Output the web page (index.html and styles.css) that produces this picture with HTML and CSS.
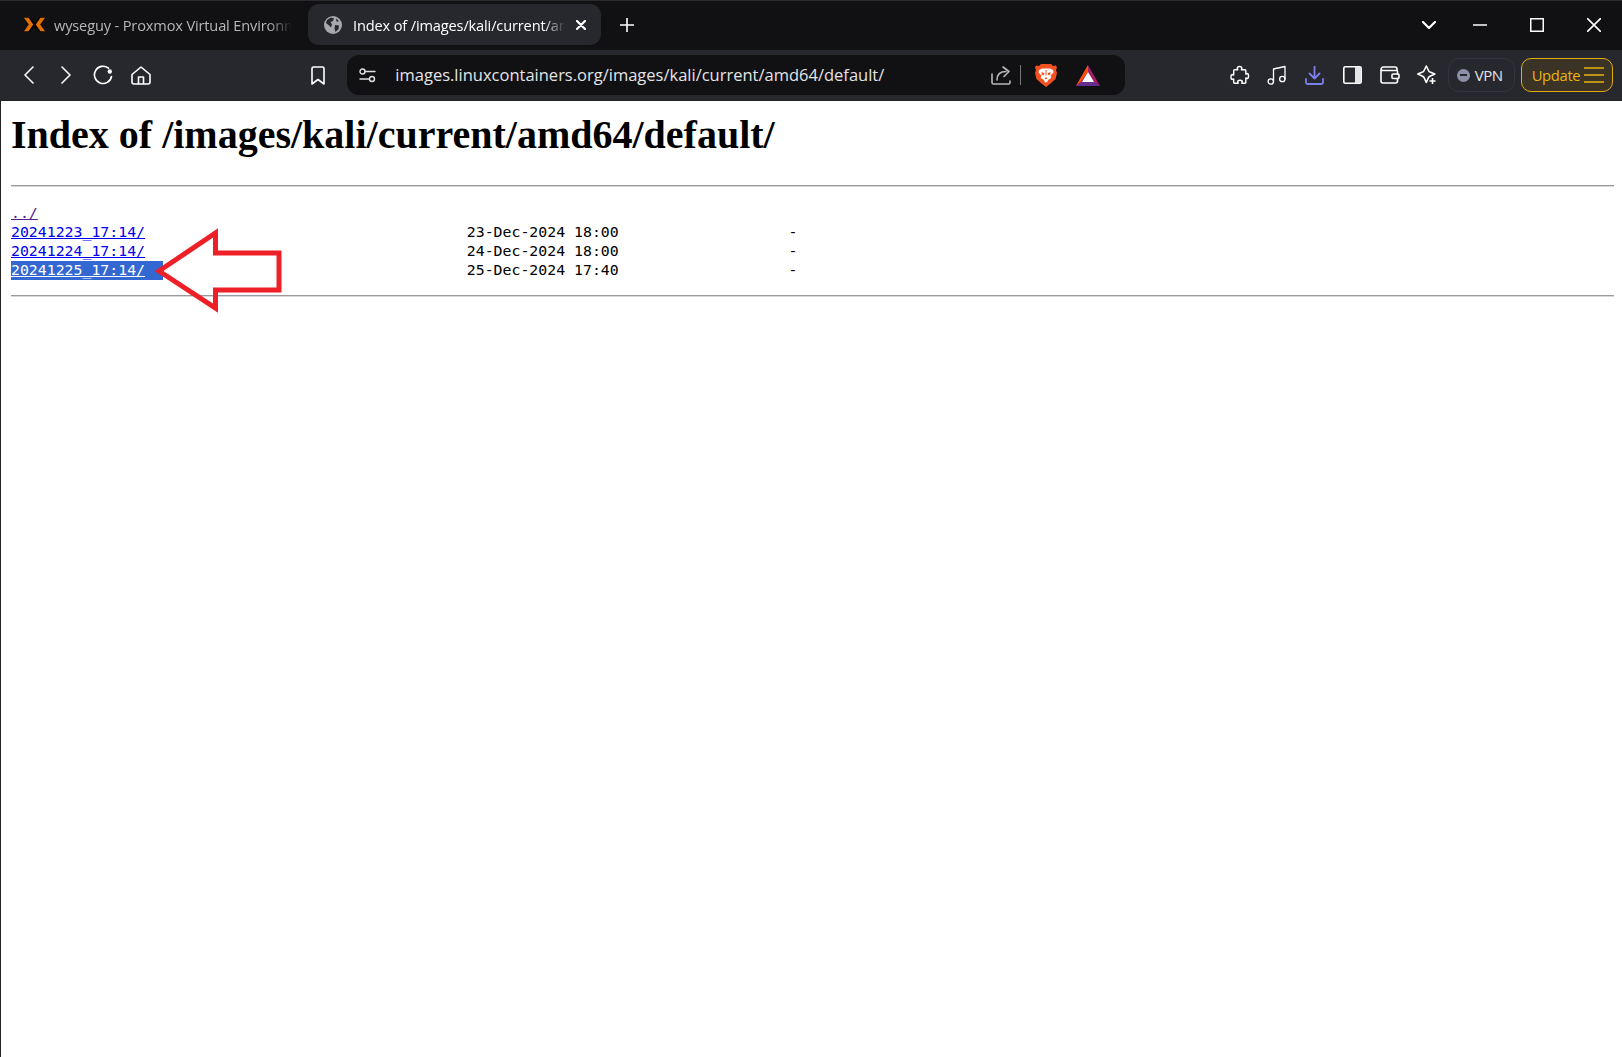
FILE: index.html
```html
<!DOCTYPE html>
<html lang="en">
<head>
<meta charset="utf-8">
<title>Index of /images/kali/current/amd64/default/</title>
<link rel="stylesheet" href="styles.css">
</head>
<body>
<div class="browser">
  <header class="tabstrip">
    <div class="tab">
      <svg class="favicon-px" width="21" height="15" viewBox="0 0 20 14"><path d="M1 0h4.500L10 5 14.500 0H19l-6.700 7L19 14h-4.500L10 9l-4.500 5H1l6.700-7z" fill="#000"/><path d="M0 .5h4.300L8.800 7l-4.500 6.500H0L4.600 7zM20 .5h-4.300L11.200 7l4.500 6.500H20L15.400 7z" fill="#e57000"/></svg>
      <span class="tab-title">wyseguy - Proxmox Virtual Environment</span>
    </div>
    <div class="tab tab-active">
      <svg class="favicon-globe" width="18" height="18" viewBox="0 0 18 18"><circle cx="9" cy="9" r="9" fill="#a6a8ad"/><path d="M3 4l4-2.500 3 1-1 2.500-2.500 1L8 8.500l-1 3L4.500 9 2 7zM11 9l4 .5-.5 3.500-3 3-1-3.500zM12 2.500l3 2.500-2.500.8z" fill="#27282d"/></svg>
      <span class="tab-title">Index of /images/kali/current/amd64/default/</span>
      <svg class="tab-close" width="10" height="10" viewBox="0 0 10 10"><path class="i-w2" d="M1 1l8 8M9 1l-8 8"/></svg>
    </div>
    <button class="newtab"><svg width="14" height="14" viewBox="0 0 14 14"><path class="i-w" d="M7 0v14M0 7h14"/></svg></button>
    <div class="win">
      <span class="win-btn win-list"><svg width="14" height="8" viewBox="0 0 14 8"><path class="i-w2" d="M1 1l6 6 6-6"/></svg></span>
      <span class="win-btn"><svg width="14" height="2" viewBox="0 0 14 2"><path class="i-w" d="M0 1h14"/></svg></span>
      <span class="win-btn"><svg width="14" height="14" viewBox="0 0 14 14"><rect class="i-w" x=".7" y=".7" width="12.600" height="12.600"/></svg></span>
      <span class="win-btn"><svg width="14" height="14" viewBox="0 0 14 14"><path class="i-w" d="M.5.500l13 13M13.500.500l-13 13"/></svg></span>
    </div>
  </header>

  <nav class="toolbar">
    <div class="group group-nav">
      <span class="ico"><svg width="11" height="18" viewBox="0 0 11 18"><path class="i-w" d="M10 1L2 9l8 8"/></svg></span>
      <span class="ico"><svg width="11" height="18" viewBox="0 0 11 18"><path class="i-w" d="M1 1l8 8-8 8"/></svg></span>
      <span class="ico"><svg width="20" height="20" viewBox="0 0 20 20"><path class="i-w" d="M15.500 3.200A8.600 8.600 0 1 0 18.500 11.500"/><circle cx="16.800" cy="6.500" r="2.200" fill="#fff"/></svg></span>
      <span class="ico"><svg width="20" height="19" viewBox="0 0 20 19"><path class="i-w" d="M1 8.500L10 1l9 7.500V16a2 2 0 0 1-2 2H3a2 2 0 0 1-2-2zM7.500 18v-7h5v7"/></svg></span>
    </div>
    <span class="ico ico-bookmark"><svg width="14" height="19" viewBox="0 0 14 19"><path class="i-w" d="M1 2.500A1.500 1.500 0 0 1 2.500 1h9A1.500 1.500 0 0 1 13 2.500V18l-6-4.500L1 18z"/></svg></span>
    <div class="urlbar">
      <svg class="tune" width="17" height="15" viewBox="0 0 17 15"><g class="i-l"><circle cx="3.500" cy="3.500" r="2.500"/><path d="M6 3.500h10M1 11h9"/><circle cx="13" cy="11" r="2.500"/></g></svg>
      <span class="url">images.linuxcontainers.org/images/kali/current/amd64/default/</span>
      <svg class="share" width="20" height="19" viewBox="0 0 20 19"><path class="i-g" d="M1 8v8.500A1.500 1.500 0 0 0 2.500 18h15a1.500 1.500 0 0 0 1.500-1.500V15M6 14c0-6 3.500-8.500 9-8.500M12 1l6 4.500-5 5"/></svg>
      <span class="sep"></span>
      <svg class="brave" width="22" height="23" viewBox="0 0 22 23"><path d="M6 0h10l2 2 3-.5 1 2-1 2.500 1 3-1.500 6-5 4.500L11 23l-4.500-3.500-5-4.500L0 9l1-3L0 3.500l1-2 3 .5z" fill="#f4511e"/><path d="M7 4.500h8l3 1.500.5 2.500-3 3 .8 2.500-3.300 2-1 2.500-1-.5-1 .5-1-2.500-3.300-2 .8-2.500-3-3L4 6z" fill="#fff"/><path d="M6.500 8l3 1.200-.8 2-2-.5zM15.500 8l-3 1.200.8 2 2-.5zM9.500 14l1.500-.8 1.500.8-1.500 1.500zM10.500 6h1v5.500h-1z" fill="#f4511e"/></svg>
      <svg class="bat" width="24" height="21" viewBox="0 0 24 21"><path d="M12 0l12 21H0z" fill="#9e1f63"/><path d="M12 0v7l-7 9.500L0 21z" fill="#ff5000"/><path d="M0 21l5.500-4h13l5.500 4z" fill="#662d91"/><path d="M12 7l6 10H6z" fill="#fff"/></svg>
    </div>
    <div class="group group-ext">
      <span class="ico"><svg width="20" height="20" viewBox="0 0 20 20"><path class="i-w" d="M7 3.500C7 1 12 1 12 3.500c0 .8-.5 1-.5 1.500h4a1 1 0 0 1 1 1v3.500c.8 0 1-.5 1.500-.5 2 0 2 5 0 5-.5 0-.7-.5-1.500-.5V18a1 1 0 0 1-1 1h-3.500c0-.8.5-1 .5-1.500 0-2.300-5-2.300-5 0 0 .5.500.7.500 1.500H4a1 1 0 0 1-1-1v-3.500c-.8 0-1 .5-1.500.5C-.5 15-.5 10 1.500 10c.5 0 .7.500 1.500.5V6a1 1 0 0 1 1-1h3.500C7.500 4.500 7 4.300 7 3.500z" transform="translate(1 0) scale(.9 .96)"/></svg></span>
      <span class="ico"><svg width="20" height="20" viewBox="0 0 20 20"><g class="i-t"><circle cx="3.800" cy="16.500" r="2.700"/><circle cx="15.300" cy="14" r="2.700"/><path d="M6.500 16.500V4L18 1.500V14"/></g></svg></span>
      <span class="ico"><svg width="19" height="19" viewBox="0 0 19 19"><path class="i-b" d="M9.500 0v12M4.500 7.500l5 5 5-5M1 13v3.500A1.500 1.500 0 0 0 2.500 18h14a1.500 1.500 0 0 0 1.500-1.500V13"/></svg></span>
      <span class="ico"><svg width="19" height="18" viewBox="0 0 19 18"><rect x=".8" y=".8" width="17.400" height="16.400" rx="1.500" fill="none" stroke="#fff" stroke-width="1.600"/><path d="M12 1h5.500A.8.800 0 0 1 18 2v14a.8.800 0 0 1-.5 1H12z" fill="#e4e4e6"/></svg></span>
      <span class="ico"><svg width="20" height="18" viewBox="0 0 20 18"><g class="i-w"><path d="M1 3.500A2.500 2.500 0 0 1 3.500 1H15a2 2 0 0 1 2 2v1.500H3.500A2.500 2.500 0 0 1 1 3.500V15a2 2 0 0 0 2 2h12.500a2 2 0 0 0 2-2v-2.500M17.500 8V6a1.500 1.500 0 0 0-.5-1.500"/><rect x="12" y="8" width="7" height="4.500" rx="1"/></g></svg></span>
      <span class="ico"><svg width="20" height="20" viewBox="0 0 20 20"><path class="i-w" d="M8.500 1l2.200 4.500a3 3 0 0 0 1.500 1.500L17 9l-4.800 2.200a3 3 0 0 0-1.500 1.500L8.500 17.500l-2.200-4.800a3 3 0 0 0-1.500-1.500L0 9l4.800-2a3 3 0 0 0 1.500-1.500z" transform="translate(.8 0)"/><path d="M15.500 13v6M12.500 16h6" stroke="#fff" stroke-width="1.600" fill="none"/></svg></span>
    </div>
    <div class="vpn"><span class="vpn-dot"></span><span>VPN</span></div>
    <div class="update"><span>Update</span><svg width="20" height="16" viewBox="0 0 20 16"><path d="M0 1h20M0 8h20M0 15h20" stroke="#e8b40f" stroke-width="1.600" fill="none"/></svg></div>
  </nav>

  <main class="page">
    <h1 class="heading">Index of /images/kali/current/amd64/default/</h1>
    <hr class="rule rule-top">
    <pre class="listing"><a class="link visited" href="#">../</a>
<a class="link" href="#">20241223_17:14/</a>                                    23-Dec-2024 18:00                   -
<a class="link" href="#">20241224_17:14/</a>                                    24-Dec-2024 18:00                   -
<span class="selected"><a class="link" href="#">20241225_17:14/</a>  </span>                                  25-Dec-2024 17:40                   -</pre>
    <hr class="rule rule-bottom">
    <svg class="arrow" width="140" height="90" viewBox="0 0 140 90"><path d="M5 43L61.500 5v20h63.500v37H61.500v18z" fill="none" stroke="#ee2027" stroke-width="5"/></svg>
  </main>
</div>
</body>
</html>
```

FILE: styles.css
```css
* { box-sizing: border-box; }
html, body { margin: 0; height: 100%; }
body { background: #fff; overflow: hidden; }

.browser { display: flex; flex-direction: column; height: 100vh; }

.i-w, .i-w2, .i-l, .i-g, .i-b, .i-t { fill: none; stroke-linecap: round; stroke-linejoin: round; }
.i-w { stroke: #fff; stroke-width: 1.6; }
.i-t { stroke: #fff; stroke-width: 1.3; }
.i-w2 { stroke: #fff; stroke-width: 2.2; }
.i-l { stroke: #e0e0e2; stroke-width: 1.4; }
.i-g { stroke: #b8b8bc; stroke-width: 1.6; }
.i-b { stroke: #7b7fe8; stroke-width: 1.8; }

.tabstrip {
  display: flex; align-items: center; flex: none;
  height: 50px; padding-bottom: 2px; background: #111113; border-top: 1px solid #2b2b2d;
  font: 14.6px "Open Sans", sans-serif; letter-spacing: -.15px;
}
.tab { display: flex; align-items: center; height: 41px; overflow: hidden; }
.tab:first-child { width: 308px; padding-left: 24px; }
.favicon-px { flex: none; margin-right: 9px; }
.tab-title { flex: 1; white-space: nowrap; overflow: hidden; color: #b6b6ba; }
.tab:first-child .tab-title { max-width: 238px; -webkit-mask-image: linear-gradient(90deg, #000 90%, transparent); mask-image: linear-gradient(90deg, #000 90%, transparent); }
.tab-active { width: 293px; padding: 0 15px 0 16px; background: #27282d; border-radius: 11px; }
.tab-active .tab-title { color: #fff; margin-right: 11px; -webkit-mask-image: linear-gradient(90deg, #000 90%, transparent); mask-image: linear-gradient(90deg, #000 90%, transparent); }
.favicon-globe { flex: none; margin-right: 11px; }
.tab-close { flex: none; }
.newtab { display: flex; padding: 0; margin-left: 19px; background: none; border: 0; }
.win { display: flex; align-items: center; margin-left: auto; }
.win-btn { display: flex; justify-content: center; width: 57px; }
.win-list { width: 44px; }

.toolbar {
  display: flex; align-items: center; flex: none;
  height: 50px; padding: 0 10px; background: #27282d;
}
.group { display: flex; }
.ico { display: flex; align-items: center; justify-content: center; width: 37.4px; height: 40px; flex: none; }
.ico-bookmark { margin-left: 139.400px; margin-right: 1px; }
.urlbar {
  display: flex; align-items: center; flex: none;
  width: 778px; height: 40px; margin-left: 10px; padding: 0 25px 0 12px;
  background: #111113; border-radius: 12px;
}
.tune { flex: none; margin-right: 19px; }
.url { flex: 1; padding-bottom: 2px; color: #e4e4e7; font: 16.500px "Open Sans", sans-serif; letter-spacing: 0; white-space: nowrap; }
.share { flex: none; margin-right: 9px; }
.sep { flex: none; width: 1px; height: 20px; background: #77777b; margin-right: 14px; }
.brave { flex: none; margin-right: 19px; }
.bat { flex: none; }
.group-ext { margin-left: 96px; }
.vpn {
  display: flex; align-items: center; flex: none; gap: 5px;
  width: 67px; height: 34px; margin-left: 2px; padding-left: 8px;
  border: 1px solid #34353c; border-radius: 11px;
  color: #e4e4e8; font: 15px "Open Sans", sans-serif; letter-spacing: -.4px;
}
.vpn-dot { position: relative; width: 13px; height: 13px; border-radius: 50%; background: #8c8fa6; }
.vpn-dot::after { content: ""; position: absolute; left: 3px; right: 3px; top: 5.500px; height: 2px; background: #27282d; }
.update {
  display: flex; align-items: center; flex: none;
  width: 92px; height: 34px; margin-left: 6px; padding-left: 10px; gap: 4px;
  background: #3a3326; border: 1.500px solid #e0ae0d; border-radius: 10px;
  color: #e8b40f; font: 14.800px "Open Sans", sans-serif; letter-spacing: -.35px;
}

.page {
  position: relative; flex: 1; overflow: hidden;
  background: #fff; border-left: 1px solid #222; border-top: 1px solid #222;
  padding: 0 8px 0 10px;
}
.heading { margin: 0; padding-top: 11px; font: bold 40px/46px "Liberation Serif", serif; color: #000; }
.rule { height: 2px; margin: 0; border: 0; border-top: 1px solid #9a9a9a; border-bottom: 1px solid #d8d8d8; }
.rule-top { margin-top: 27px; }
.listing { margin: 17px 0 0; font: 14.850px/19px "DejaVu Sans Mono", monospace; color: #000; }
.rule-bottom { margin-top: 15px; }
.link { color: #0000ee; text-decoration: underline; }
.visited { color: #551a8b; }
.selected { background: #3367d1; display: inline-block; height: 19px; }
.selected .link { color: #fff; }
.arrow { position: absolute; left: 153px; top: 127px; }
```
